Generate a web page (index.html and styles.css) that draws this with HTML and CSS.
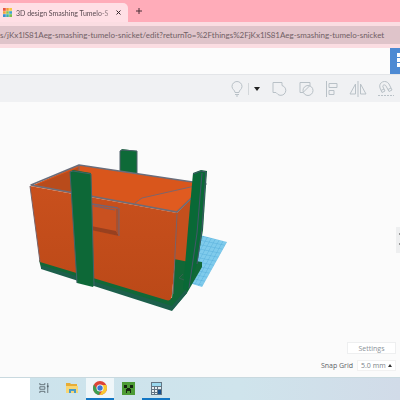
FILE: index.html
```html
<!DOCTYPE html>
<html lang="en">
<head>
    <meta charset="UTF-8">
    <meta name="viewport" content="width=device-width, initial-scale=1.0">
    <title>3D design Smashing Tumelo-Snicket</title>
    <link rel="stylesheet" href="styles.css">
</head>
<body>
    <div class="tab-strip">
        <div class="tab">
            <svg class="favicon" viewBox="0 0 9 9" aria-hidden="true">
                <path fill="#e8543f" d="M0 0h3v3H0z"/><path fill="#f39a3b" d="M3 0h3v3H3z"/><path fill="#f6c945" d="M6 0h3v3H6z"/>
                <path fill="#f0a03c" d="M0 3h3v3H0z"/><path fill="#8cc152" d="M3 3h3v3H3z"/><path fill="#3fa4c9" d="M6 3h3v3H6z"/>
                <path fill="#3c8fd0" d="M0 6h3v3H0z"/><path fill="#43b3a0" d="M3 6h3v3H3z"/><path fill="#7fbf4d" d="M6 6h3v3H6z"/>
                <path stroke="#fff" stroke-width=".6" opacity=".6" d="M3 0v9M6 0v9M0 3h9M0 6h9"/>
            </svg>
            <span class="tab-title">3D design Smashing Tumelo-S</span>
            <button class="icon-btn" aria-label="Close tab">
                <svg width="5" height="5" viewBox="0 0 5 5"><path d="M.5.5l4 4M4.500.5l-4 4" stroke="#33252a" stroke-width="1"/></svg>
            </button>
        </div>
        <button class="icon-btn" aria-label="New tab">
            <svg width="6" height="6" viewBox="0 0 6 6"><path d="M3 0v6M0 3h6" stroke="#4b3038" stroke-width="1"/></svg>
        </button>
    </div>
    <div class="address-bar">
        <input type="text" class="url" aria-label="Address" value="s/jKx1lS81Aeg-smashing-tumelo-snicket/edit?returnTo=%2Fthings%2FjKx1lS81Aeg-smashing-tumelo-snicket">
    </div>
    <header class="app-header">
        <button class="grid-btn" aria-label="Design view">
            <svg width="10" height="14" viewBox="0 0 10 14" fill="#fff"><path d="M0 0h4v4H0zM5 0h4v4H5zM0 5h4v4H0zM5 5h4v4H5zM0 10h4v4H0zM5 10h4v4H5z"/></svg>
        </button>
    </header>
    <div class="toolbar">
        <button class="icon-btn" aria-label="Show all">
            <svg width="12" height="16" viewBox="0 0 12 16"><path d="M4 11.500C4 9 1 8.500 1 5.500a5 5 0 0 1 10 0C11 8.500 8 9 8 11.500zM4 13.500h4M5 15h2"/></svg>
        </button>
        <span class="divider"></span>
        <button class="icon-btn caret" aria-label="Visibility options">
            <svg width="6" height="4" viewBox="0 0 6 4"><path d="M0 0h6L3 4z"/></svg>
        </button>
        <button class="icon-btn" aria-label="Group">
            <svg width="16" height="16" viewBox="0 0 16 16"><path d="M2 1.500h9v3a5 5 0 1 1-4 9l-2-2H2z"/></svg>
        </button>
        <button class="icon-btn" aria-label="Ungroup">
            <svg width="16" height="16" viewBox="0 0 16 16"><path d="M5 11.500H2v-10h10v3"/><circle cx="10" cy="9.500" r="5"/><path d="M5 11.500L12 4.500"/></svg>
        </button>
        <button class="icon-btn" aria-label="Align">
            <svg width="13" height="16" viewBox="0 0 13 16"><path d="M1.500 0v16M4 2.500h8v4H4zM4 9.500h5v4H4z"/></svg>
        </button>
        <button class="icon-btn" aria-label="Mirror">
            <svg width="18" height="16" viewBox="0 0 18 16"><path d="M9 0v16M6.500 3v10H1zM11.500 3v10H17z"/></svg>
        </button>
        <button class="icon-btn" aria-label="Cruise">
            <svg width="16" height="16" viewBox="0 0 16 16"><path d="M4 11.500L2 7C0 1 8-2 11 3l3 6-3 1.500L8 5C7 3 4 4 5 6l2 4z"/><path d="M3 9.500l3-1.500M10 8.500l3-1.500"/><path stroke-dasharray="2 1" d="M0 14.500h16"/></svg>
        </button>
    </div>
    <main class="workplane">
        <svg class="scene" viewBox="0 102 400 275" preserveAspectRatio="xMinYMin meet" role="img" aria-label="Orange box with green posts">
            <defs>
                <pattern id="grid" width="4" height="4" patternUnits="userSpaceOnUse" patternTransform="matrix(1 .2 -.55 1 0 0)">
                    <rect width="4" height="4" fill="#7fcbec"/>
                    <path d="M0 0h4M0 0v4" stroke="#55aeda" stroke-width=".8"/>
                </pattern>
                <linearGradient id="front" x1="0" y1="0" x2="0" y2="1">
                    <stop offset="0" stop-color="#c9501d"/>
                    <stop offset="1" stop-color="#bb4918"/>
                </linearGradient>
            </defs>
            <path fill="url(#grid)" d="M196 234l31 8-25 45-16-5z"/>
            <!-- back post -->
            <path fill="#0e6a38" d="M120 151l2-2 15 2v24l-17-3z"/>
            <path stroke="#50606c" fill="none" d="M120 172v-21l2-1 15 1v22"/>
            <!-- base -->
            <path fill="#116837" d="M39 260l133 38 3-40 27 4v5l-15 26-15 17L41 268z"/>
            <path fill="#1c5f4b" d="M41 265l131 41 15-18v5l-15 18L41 269z"/>
            <!-- inside -->
            <path fill="#d9561c" d="M31 186l48-21 127 19-29 29z"/>
            <path fill="#b94b1b" d="M36 185l43-18v13l-9 12z"/>
            <path fill="#e05b20" d="M135 203l7-5 56-13 5 1-28 26z"/>
            <path stroke="#7f656a" fill="none" d="M79 166v7M135 203l7-5 53-12"/>
            <!-- right and front faces -->
            <path fill="#c4501d" d="M177 213l29-29-17 78-15-3z"/>
            <path fill="url(#front)" d="M30 186l147 27 1 15-6 66q0 8-6 6L40 262z"/>
            <path fill="none" stroke="#77636a" d="M30 186l10 76M177 214l-4 80"/>
            <path fill="none" stroke="#6a6d7b" stroke-width="1.500" stroke-linejoin="round" d="M31 185l48-20 127 19-29 28z"/>
            <!-- handle -->
            <path fill="#c95120" d="M91 203l28 5v28l-28-6z"/>
            <path fill="#98401f" d="M91 226l25 5 3 5-28-6z"/>
            <path fill="#a8502f" d="M116 209l3-1v28l-3-5z"/>
            <path fill="none" stroke="#736372" stroke-width="1.500" d="M92 204l26 4"/>
            <path fill="none" stroke="#736372" d="M119 208v28M94 206l21 4"/>
            <!-- posts -->
            <path fill="#0d6837" d="M70 172l3-2 18 3 3 112-1 2-16-4z"/>
            <path fill="none" stroke="#42646a" d="M77 283l-7-111 3-1 18 3 3 112"/>
            <path fill="#096936" d="M193 173l8-3 6 1-4 59-6 34-10 27-4-2 5-60z"/>
            <path fill="none" stroke="#45566a" d="M193 174l8-3 5 1-4 57-5 35M202 173l-5 60-8 55"/>
            <path fill="none" stroke="#35614f" d="M184 280l-5-2 4-4"/>
        </svg>
        <button class="side-handle" aria-label="Toggle shapes panel">
            <svg width="4" height="14" viewBox="0 0 4 14"><path d="M4 1L3 2l1 1M4 11l-1 1 1 1" fill="none" stroke="#999"/></svg>
        </button>
        <div class="settings-panel">
            <button class="settings-btn">Settings</button>
            <div class="snap-row">
                <label for="snapGrid">Snap Grid</label>
                <span class="snap-field">
                    <select id="snapGrid" class="snap-select">
                        <option>5.0 mm</option>
                        <option>1.0 mm</option>
                    </select>
                </span>
            </div>
        </div>
    </main>
    <footer class="taskbar">
        <input type="text" class="search" aria-label="Search">
        <button class="task" aria-label="Task view">
            <svg width="10" height="10" viewBox="0 0 12 12" fill="none" stroke="#55636a"><path d="M1 0v2h6V0M1 4.500h6v3H1zM1 12v-2h6v2M10.500 0v12"/><path stroke-width="2" d="M10.500 3v2"/></svg>
        </button>
        <button class="task" aria-label="File Explorer">
            <svg width="12" height="12" viewBox="0 0 12 12"><path fill="#e8ad36" d="M0 1h4l1 1h6v9H0z"/><path fill="#f8d775" d="M0 4h12v7H0z"/><path fill="#4a9bc8" d="M3 11V7h7v4H8V9H5v2z"/></svg>
        </button>
        <button class="task task-open task-active" aria-label="Chrome">
            <svg width="14" height="14" viewBox="0 0 14 14"><circle cx="7" cy="7" r="7" fill="#dc4437"/><path fill="#3b9f51" d="M1 3.500L4.500 9 7 10l-1 4A7 7 0 0 1 1 3.500z"/><path fill="#f8c930" d="M7 4h6.300A7 7 0 0 1 6.500 14L10 8.500z"/><circle cx="7" cy="7" r="3.500" fill="#fff"/><circle cx="7" cy="7" r="2.700" fill="#3977d4"/></svg>
        </button>
        <button class="task" aria-label="Minecraft">
            <svg width="13" height="13" viewBox="0 0 13 13"><path fill="#4c9b35" d="M0 0h13v13H0z"/><path fill="#15260f" d="M2 3h3v3H2zM8 3h3v3H8zM5 6h3v1h1v4H8V9H5v2H4V7h1z"/></svg>
        </button>
        <button class="task task-open" aria-label="Calculator">
            <svg width="11" height="13" viewBox="0 0 11 13"><path fill="#637684" d="M0 0h11v13H0z"/><path fill="#9bd9ee" d="M1 1h9v3H1z"/><path fill="#e8eef1" d="M1 5h2v2H1zM4 5h2v2H4zM7 5h3v2H7zM1 8h2v2H1zM4 8h2v2H4zM1 11h2v1H1zM4 11h2v1H4z"/><path fill="#174f8c" d="M7 8h3v4H7z"/></svg>
        </button>
    </footer>
</body>
</html>
```

FILE: styles.css
```css
* {
    box-sizing: border-box;
}
body {
    font-family: "Open Sans", "Noto Sans", sans-serif;
    font-size: 7px;
    background-color: #fbfbfb;
    margin: 0;
    min-height: 100vh;
    display: flex;
    flex-direction: column;
}
button,
input,
select {
    font: inherit;
    border: none;
    border-radius: 0;
    padding: 0;
    margin: 0;
}
button {
    background: none;
    cursor: pointer;
}
.icon-btn {
    display: flex;
    align-items: center;
}
.tab-strip {
    display: flex;
    align-items: center;
    gap: 8px;
    height: 22px;
    background-color: #ffacb9;
}
.tab {
    display: flex;
    align-items: center;
    align-self: flex-end;
    width: 128px;
    height: 19px;
    padding: 0 7px 0 3px;
    background-color: #ffdfe5;
    border-radius: 0 5px 0 0;
}
.favicon {
    width: 9px;
    height: 9px;
    margin-right: 4px;
    flex-shrink: 0;
}
.tab-title {
    flex: 1;
    font-family: Lato, sans-serif;
    color: #584950;
    white-space: nowrap;
    mask-image: linear-gradient(to right, #000 80%, #0004);
}
.address-bar {
    padding: 4px 0;
    background-color: #fbdde2;
}
.url {
    display: block;
    width: 100%;
    height: 18px;
    background-color: #dfc4ca;
    color: #705f65;
    font-family: Lato, sans-serif;
    font-size: 8px;
}
.app-header {
    display: flex;
    justify-content: flex-end;
    height: 27px;
    background-color: #fcfcfc;
    border-bottom: 1px solid #e3e5e8;
}
.grid-btn {
    width: 10px;
    padding-left: 7px;
    overflow: hidden;
    background-color: #4d8ad3;
}
.toolbar {
    display: flex;
    align-items: center;
    justify-content: flex-end;
    gap: 11px;
    height: 27px;
    padding-right: 6px;
    background-color: #f0f1f3;
}
.toolbar svg {
    fill: none;
    stroke: #b9c1c7;
}
.toolbar .caret svg {
    fill: #222;
    stroke: none;
}
.divider {
    width: 1px;
    height: 12px;
    margin: 0 -6px;
    background-color: #d3d7da;
}
.workplane {
    position: relative;
    flex: 1;
    background-color: #fbfbfb;
}
.scene {
    display: block;
    width: 100%;
    max-width: 400px;
}
.side-handle {
    position: absolute;
    top: 125px;
    right: 0;
    width: 4px;
    height: 26px;
    background-color: #eeeff0;
}
.settings-panel {
    position: absolute;
    right: 4px;
    bottom: 6px;
    display: flex;
    flex-direction: column;
    align-items: flex-end;
    gap: 6px;
    color: #5b6268;
}
.settings-btn {
    width: 49px;
    height: 12px;
    background-color: #fff;
    border: 1px solid #eeeff0;
    color: #8b9298;
}
.snap-row {
    display: flex;
    align-items: center;
    gap: 4px;
}
.snap-field {
    display: flex;
    align-items: center;
    gap: 2px;
    padding: 0 3px;
    background-color: #fff;
    border: 1px solid #f1f1f1;
}
.snap-field::after {
    content: "";
    border: 2px solid transparent;
    border-top: none;
    border-bottom: 3px solid #333;
}
.snap-select {
    appearance: none;
    background: none;
    color: #7b8288;
}
.taskbar {
    display: flex;
    height: 23px;
    border-top: 1px solid #c9d9df;
    background: linear-gradient(to right, #cce3ec, #cfe4ec 60%, #d1dbe8);
}
.search {
    width: 30px;
    background-color: #fff;
}
.task {
    display: flex;
    align-items: center;
    justify-content: center;
    width: 28px;
    border-bottom: 2px solid transparent;
}
.task-open {
    border-bottom-color: #1276c4;
}
.task-active {
    background-color: #eff6f9;
}
```
